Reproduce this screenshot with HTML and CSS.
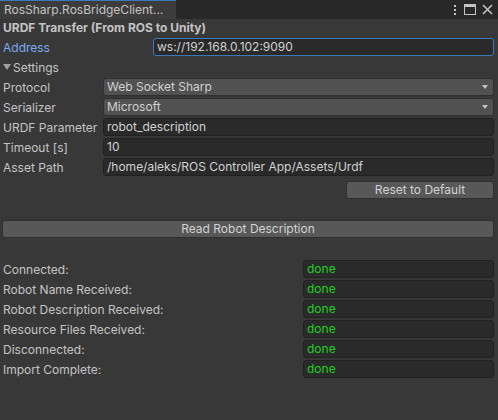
FILE: index.html
```html
<!DOCTYPE html>
<html>
<head>
<meta charset="utf-8">
<link rel="stylesheet" href="styles.css">
</head>
<body>
<div class="tabbar">
  <div class="tab">RosSharp.RosBridgeClient...</div>
  <div class="tab-tools">
    <svg class="ico" width="6" height="12" viewBox="0 0 6 12"><rect x="2" y="1" width="2" height="2" fill="#c4c4c4"/><rect x="2" y="5" width="2" height="2" fill="#c4c4c4"/><rect x="2" y="9" width="2" height="2" fill="#c4c4c4"/></svg>
    <svg class="ico" width="12" height="11" viewBox="0 0 12 11"><rect x="0.5" y="0.5" width="11" height="10" fill="none" stroke="#c4c4c4"/><rect x="1" y="1" width="10" height="2" fill="#c4c4c4"/></svg>
    <svg class="ico" width="11" height="11" viewBox="0 0 11 11"><path d="M1 1 L10 10 M10 1 L1 10" stroke="#c4c4c4" stroke-width="1.5" fill="none"/></svg>
  </div>
</div>
<div class="content">
  <div class="row title">URDF Transfer (From ROS to Unity)</div>
  <div class="row">
    <div class="label label-wide focus">Address</div>
    <div class="field focused">ws://192.168.0.102:9090</div>
  </div>
  <div class="row foldout">
    <svg class="fold" width="8" height="8" viewBox="0 0 8 8"><path d="M0 1 L8 1 L4 7 Z" fill="#a0a0a0"/></svg>
    <span>Settings</span>
  </div>
  <div class="row">
    <div class="label">Protocol</div>
    <div class="dropdown">Web Socket Sharp<span class="arrow"></span></div>
  </div>
  <div class="row">
    <div class="label">Serializer</div>
    <div class="dropdown">Microsoft<span class="arrow"></span></div>
  </div>
  <div class="row">
    <div class="label">URDF Parameter</div>
    <div class="field">robot_description</div>
  </div>
  <div class="row">
    <div class="label">Timeout [s]</div>
    <div class="field">10</div>
  </div>
  <div class="row">
    <div class="label">Asset Path</div>
    <div class="field">/home/aleks/ROS Controller App/Assets/Urdf</div>
  </div>
  <div class="row right reset-row">
    <div class="button reset">Reset to Default</div>
  </div>
  <div class="row read-row">
    <div class="button read">Read Robot Description</div>
  </div>
  <div class="status">
    <div class="row"><div class="label label-status">Connected:</div><div class="field done">done</div></div>
    <div class="row"><div class="label label-status">Robot Name Received:</div><div class="field done">done</div></div>
    <div class="row"><div class="label label-status">Robot Description Received:</div><div class="field done">done</div></div>
    <div class="row"><div class="label label-status">Resource Files Received:</div><div class="field done">done</div></div>
    <div class="row"><div class="label label-status">Disconnected:</div><div class="field done">done</div></div>
    <div class="row"><div class="label label-status">Import Complete:</div><div class="field done">done</div></div>
  </div>
</div>
</body>
</html>
```

FILE: styles.css
```css
html, body {
  margin: 0;
  padding: 0;
  background: #383838;
  width: 498px;
  height: 420px;
  overflow: hidden;
}
body {
  font-family: Inter, "Noto Sans", sans-serif;
  font-size: 12px;
  color: #c4c4c4;
}
.tabbar {
  height: 19px;
  background: #282828;
  display: flex;
  align-items: stretch;
}
.tab {
  width: 176px;
  box-sizing: border-box;
  background: #3c3c3c;
  border-top: 1px solid #3a79bb;
  padding: 1px 0 0 4px;
  line-height: 16px;
  color: #c4c4c4;
  white-space: nowrap;
}
.tab-tools {
  margin-left: auto;
  display: flex;
  align-items: center;
  gap: 6px;
  padding-right: 5px;
}
.ico { display: block; }
.content {
  padding: 0 4px 0 3px;
  display: flex;
  flex-direction: column;
  gap: 2px;
}
.row {
  display: flex;
  align-items: center;
  height: 18px;
}
.title {
  font-weight: 700;
  height: 17px;
}
.label {
  width: 100px;
  flex: none;
  white-space: nowrap;
}
.label-wide { width: 150px; }
.label-status { width: 300px; }
.focus { color: #7babf0; }
.field {
  flex: 1;
  height: 18px;
  box-sizing: border-box;
  background: #2a2a2a;
  border: 1px solid #212121;
  border-radius: 3px;
  padding: 0 3px;
  line-height: 16px;
  color: #d2d2d2;
  white-space: nowrap;
  overflow: hidden;
}
.field.focused {
  border-color: #3a79bb;
}
.done { color: #1fd11f; }
.dropdown {
  flex: 1;
  height: 18px;
  box-sizing: border-box;
  background: #515151;
  border: 1px solid #303030;
  border-radius: 3px;
  padding: 0 3px;
  line-height: 16px;
  color: #d2d2d2;
  display: flex;
  align-items: center;
}
.arrow {
  margin-left: auto;
  margin-right: 2px;
  width: 0;
  height: 0;
  border-left: 3px solid transparent;
  border-right: 3px solid transparent;
  border-top: 4px solid #c4c4c4;
}
.foldout { gap: 2px; }
.fold { display: block; }
.right { justify-content: flex-end; }
.reset-row { margin-top: 3px; }
.button {
  height: 18px;
  box-sizing: border-box;
  background: #585858;
  border: 1px solid #303030;
  border-radius: 3px;
  color: #d2d2d2;
  text-align: center;
  line-height: 16px;
}
.reset { width: 148px; }
.read-row { margin-top: 19px; margin-left: -1px; }
.read { flex: 1; }
.status {
  margin-top: 20px;
  display: flex;
  flex-direction: column;
  gap: 2px;
}
```
